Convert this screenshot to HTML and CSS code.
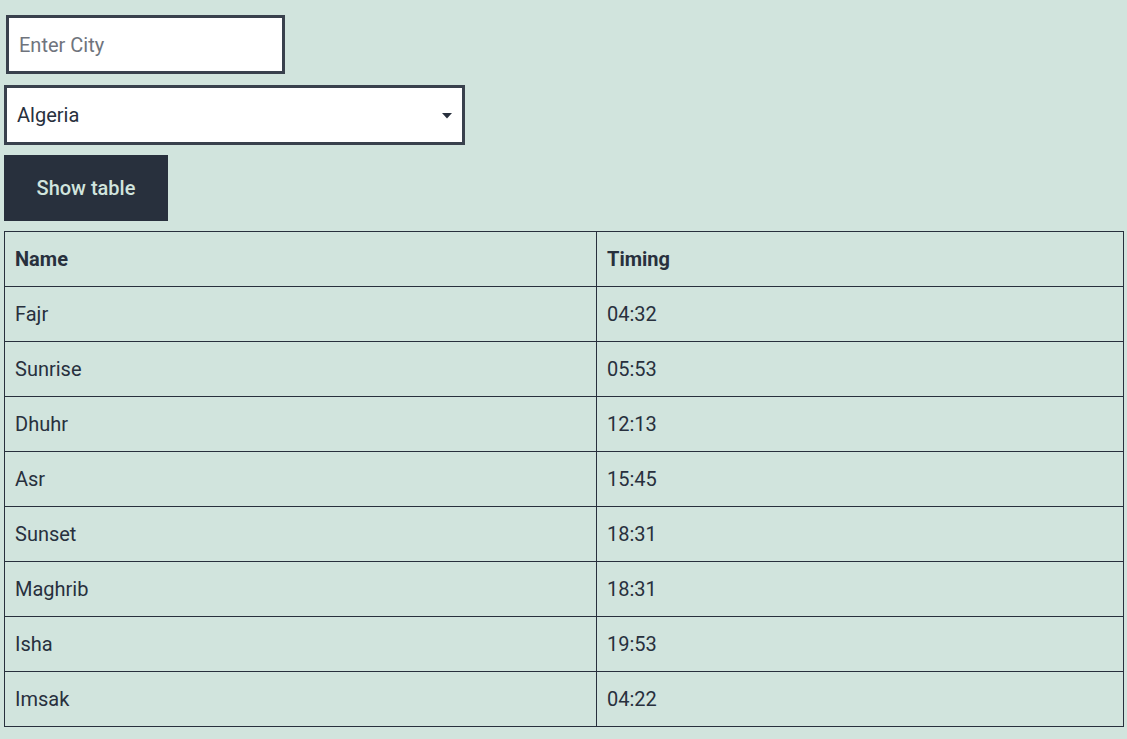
FILE: index.html
```html
<!DOCTYPE html>
<html>
<head>
    <title>Prayer Times</title>
    <link rel="stylesheet" href="styles.css">
</head>
<body>
    <div class="form">
        <input type="text" class="city-input" placeholder="Enter City">
        <div class="select-wrap">
            <select class="country-select">
                <option>Algeria</option>
            </select>
            <svg class="select-arrow" width="10" height="6" viewBox="0 0 10 6"><path d="M0 0h10L5 5.5z" fill="#28303d"/></svg>
        </div>
        <button class="show-button">Show table</button>
    </div>

    <table class="timings">
        <thead>
            <tr>
                <th class="name-col">Name</th>
                <th>Timing</th>
            </tr>
        </thead>
        <tbody>
            <tr><td>Fajr</td><td>04:32</td></tr>
            <tr><td>Sunrise</td><td>05:53</td></tr>
            <tr><td>Dhuhr</td><td>12:13</td></tr>
            <tr><td>Asr</td><td>15:45</td></tr>
            <tr><td>Sunset</td><td>18:31</td></tr>
            <tr><td>Maghrib</td><td>18:31</td></tr>
            <tr><td>Isha</td><td>19:53</td></tr>
            <tr><td>Imsak</td><td>04:22</td></tr>
        </tbody>
    </table>
</body>
</html>
```

FILE: styles.css
```css
body {
    font-family: Roboto, "Liberation Sans", sans-serif;
    font-size: 20px;
    margin: 0;
    padding: 13px 3px 0 4px;
    background-color: #d1e4dd;
    color: #28303d;
}

.form {
    display: flex;
    flex-direction: column;
    align-items: flex-start;
}

.city-input {
    box-sizing: border-box;
    width: 279px;
    height: 59px;
    margin: 2px 2px 11px 2px;
    padding: 0 10px;
    border: 3px solid #39414d;
    border-radius: 0;
    background-color: #fff;
    font-family: inherit;
    font-size: 20px;
    color: #28303d;
    outline: none;
}

.city-input::placeholder {
    color: #6f747d;
}

.select-wrap {
    position: relative;
    margin-bottom: 10px;
}

.country-select {
    box-sizing: border-box;
    width: 461px;
    height: 60px;
    padding: 0 10px;
    border: 3px solid #39414d;
    border-radius: 0;
    background-color: #fff;
    font-family: inherit;
    font-size: 20px;
    color: #28303d;
    appearance: none;
    -webkit-appearance: none;
    outline: none;
}

.select-arrow {
    position: absolute;
    left: 438px;
    top: 28px;
    pointer-events: none;
}

.show-button {
    box-sizing: border-box;
    width: 164px;
    height: 66px;
    padding: 0;
    border: none;
    border-radius: 0;
    background-color: #28303d;
    color: #d1e4dd;
    font-family: inherit;
    font-size: 20px;
    font-weight: 500;
    cursor: pointer;
}

.timings {
    margin-top: 10px;
    width: 1120px;
    border-collapse: collapse;
    border: 1px solid #28303d;
}

.timings th,
.timings td {
    box-sizing: border-box;
    height: 55px;
    padding: 0 10px;
    border: 1px solid #28303d;
    text-align: left;
    vertical-align: middle;
    line-height: 1.5;
}

.timings th {
    font-weight: 700;
}

.name-col {
    width: 592px;
}
```
